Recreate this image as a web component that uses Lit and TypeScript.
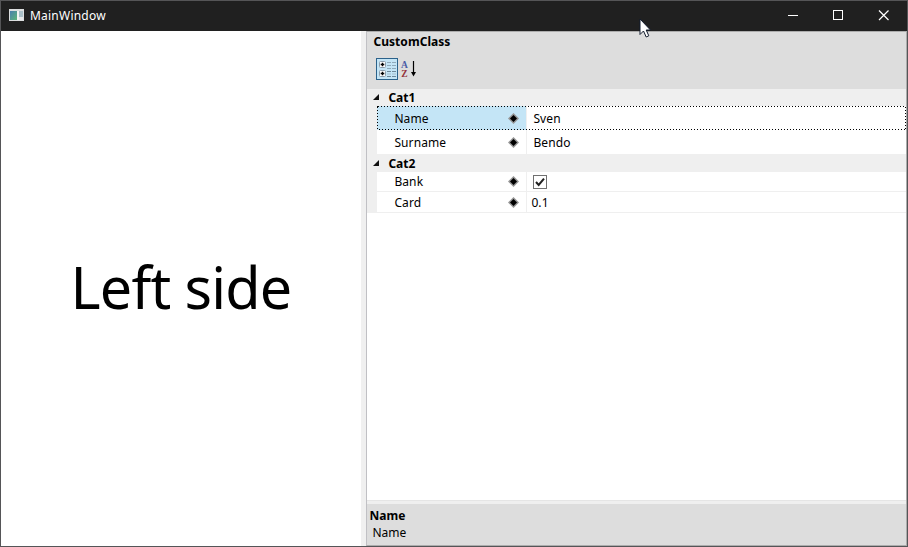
import { LitElement, html, css, svg } from "lit";
import { customElement, property } from "lit/decorators.js";

@customElement("property-row")
class PropertyRow extends LitElement {
  @property() label = "";
  @property() value = "";
  @property({ type: Boolean, reflect: true }) checked = false;
  @property({ type: Boolean, reflect: true }) selected = false;
  @property({ type: Boolean, reflect: true }) tall = false;

  static styles = css`
    :host { display: flex; height: 21px; position: relative; color: #000; }
    :host([tall]) { height: 24px; }
    :host([checked]) { height: 20px; }
    .margin { width: 10px; background: #efefef; flex: none; }
    .name, .value { box-sizing: border-box; border-bottom: 1px solid #efefef; display: flex; align-items: center; background: #fff; }
    .name { width: 149px; padding: 0 7px 0 17.4px; justify-content: space-between; line-height: 18px; }
    .name span { letter-spacing: .1px; }
    .value { flex: 1; border-left: 1px solid #efefef; padding-left: 4.4px; line-height: 18px; letter-spacing: .1px; }
    :host([tall]) .value { padding-left: 6.4px; }
    :host([tall]) .name, :host([tall]) .value { border-bottom: none; }
    span { padding-top: 1px; }
    :host([checked]) span { padding-top: 0; }
    :host([selected]) .name { background: #c4e5f6; }
    .focus { position: absolute; left: 10px; top: 0; width: 529px; height: 24px; }
    svg { display: block; flex: none; }
    .check { margin-left: 1.6px; }
  `;

  render() {
    return html`
      <div class="margin"></div>
      <div class="name">
        <span>${this.label}</span>
        <svg width="11" height="11" viewBox="0 0 11 11">
          <path d="M5.5 0L11 5.5L5.5 11L0 5.5Z" fill="#959595" />
          <path d="M5.5 2L9 5.5L5.5 9L2 5.5Z" fill="#000" />
        </svg>
      </div>
      <div class="value">
        ${this.checked
          ? html`<svg class="check" width="14" height="14" viewBox="0 0 14 14">
              <rect x=".5" y=".5" width="13" height="13" fill="#fff" stroke="#707070" />
              <path d="M3 7L5.7 10L11 3.6" fill="none" stroke="#212121" stroke-width="2" />
            </svg>`
          : html`<span>${this.value}</span>`}
      </div>
      ${this.selected
        ? html`<svg class="focus" viewBox="0 0 529 24">
            <rect x=".5" y=".5" width="528" height="23" fill="none" stroke="#000" stroke-dasharray="1 2" shape-rendering="crispEdges" />
          </svg>`
        : null}
    `;
  }
}

@customElement("category-header")
class CategoryHeader extends LitElement {
  @property() label = "";
  static styles = css`
    :host { display: flex; height: 18px; background: #efefef; font-weight: 700; line-height: 18px; align-items: center; }
    svg { margin: 0 9.4px 1px 6px; display: block; }
  `;
  render() {
    return html`<svg width="6" height="6" viewBox="0 0 6 6"><path d="M6 0V6H0Z" fill="#111" /></svg><span>${this.label}</span>`;
  }
}

@customElement("app-root")
class AppRoot extends LitElement {
  static styles = css`
    :host {
      display: flex; flex-direction: column; box-sizing: border-box; width: 908px; height: 547px;
      border: 1px solid #555557; background: #fff; position: relative; overflow: hidden;
      font: 12px "Noto Sans", "Open Sans", sans-serif; color: #000;
    }
    svg { display: block; }
    .titlebar { height: 30px; background: #202020; color: #fff; display: flex; align-items: center; flex: none; }
    .app-icon { margin: 0 6px 2px 8px; }
    .title { flex: 1; line-height: 18px; letter-spacing: .22px; }
    .buttons { display: flex; }
    .buttons svg { width: 45.5px; height: 30px; }
    .body { flex: 1; display: flex; min-height: 0; }
    .left { width: 360px; display: flex; align-items: center; justify-content: center; font-size: 57.5px; letter-spacing: -.8px; line-height: 80px; white-space: nowrap; padding-bottom: 3px; box-sizing: border-box; }
    .splitter { width: 5px; background: #f0f0f0; }
    .grid { flex: 1; box-sizing: border-box; border: 1px solid #acacac; border-left-color: #c0c0c4; display: flex; flex-direction: column; }
    .head { height: 57px; background: #ddd; flex: none; box-sizing: border-box; padding-top: 1px; }
    .head b { display: block; padding-left: 6.4px; line-height: 18px; height: 25px; letter-spacing: .05px; }
    .tools { display: flex; padding-left: 9px; }
    .rows { flex: 1; }
    .gap { height: 4px; background: #efefef; border-top: 1px solid #e5e5e5; box-sizing: border-box; }
    .info { height: 41px; background: #ddd; box-sizing: border-box; padding: 3px 0 0 2.5px; line-height: 17px; }
    .info div + div { padding-left: 3px; }
    .cursor { position: absolute; left: 638px; top: 17px; }
    .cat1 { height: 17px; }
    .cat2 { box-sizing: border-box; padding-top: 1px; }
  `;

  private plus(y: number) {
    return svg`<rect x="3.5" y=${y + 0.5} width="6" height="6" rx="1" fill="#fff" stroke="#8b9cab" />
      <path d=${`M4.7 ${y + 3.5}h3.6M6.5 ${y + 1.7}v3.6`} stroke="#000" stroke-width="1.4" />`;
  }

  render() {
    return html`
      <div class="titlebar">
        <svg class="app-icon" width="15" height="12" viewBox="0 0 15 12">
          <defs><linearGradient id="pane" x2="1" y2="1"><stop stop-color="#4a7fae" /><stop offset="1" stop-color="#5eb578" /></linearGradient></defs>
          <rect width="15" height="12" fill="#dcdedf" />
          <rect x="1" y="2" width="7" height="9" fill="url(#pane)" />
          <rect x="8" y="2" width="2" height="9" fill="#f4f4f4" />
          <rect x="10" y="2" width="4" height="6" fill="#a9bfc8" />
          <rect x="10" y="8" width="4" height="3" fill="#e6e8ea" />
        </svg>
        <span class="title">MainWindow</span>
        <div class="buttons">
          <svg viewBox="0 0 45.5 30"><path d="M16.5 14.5h10" stroke="#fff" shape-rendering="crispEdges" /></svg>
          <svg viewBox="0 0 45.5 30"><rect x="17" y="9.5" width="9" height="9" fill="none" stroke="#fff" shape-rendering="crispEdges" /></svg>
          <svg viewBox="0 0 45.5 30"><path d="M17 9.5l9.5 9.5M26.5 9.5l-9.5 9.5" stroke="#fff" stroke-width="1.2" /></svg>
        </div>
      </div>
      <div class="body">
        <div class="left"><span>Left side</span></div>
        <div class="splitter"></div>
        <div class="grid">
          <div class="head">
            <b>CustomClass</b>
            <div class="tools">
              <svg width="22" height="22" viewBox="0 0 22 22">
                <rect x=".5" y=".5" width="21" height="21" fill="#c4e5f6" stroke="#2c628b" />
                ${this.plus(3)}${this.plus(12)}
                <path d="M11 4.5h4M16 4.5h4M11 7.5h4M16 7.5h4M11 10.5h4M16 10.5h4" stroke="#8fa9ba" />
                <path d="M11 13.5h4M16 13.5h4M11 18.5h4M16 18.5h4" stroke="#6e8798" />
                <path d="M11 16h4M16 16h4" stroke="#a5bccb" />
              </svg>
              <svg width="20" height="22" viewBox="0 0 20 22">
                <text x="3" y="9.8" font-family="Liberation Serif, serif" font-weight="700" font-size="9.5" fill="#4a5ba6">A</text>
                <text x="3.3" y="18.8" font-family="Liberation Serif, serif" font-weight="700" font-size="9.5" fill="#94343a">Z</text>
                <path d="M15.5 3v13" stroke="#000" stroke-width="1.2" /><path d="M13 14h5l-2.5 4.5Z" />
              </svg>
            </div>
          </div>
          <div class="rows">
            <category-header class="cat1" label="Cat1"></category-header>
            <property-row label="Name" value="Sven" selected tall></property-row>
            <property-row label="Surname" value="Bendo" tall></property-row>
            <category-header class="cat2" label="Cat2"></category-header>
            <property-row label="Bank" checked></property-row>
            <property-row label="Card" value="0.1"></property-row>
          </div>
          <div class="gap"></div>
          <div class="info"><div><b>Name</b></div><div>Name</div></div>
        </div>
      </div>
      <svg class="cursor" width="12" height="20" viewBox="0 0 12 20">
        <path d="M1 1V16.5L4.5 13L7.2 19L9.8 17.8L7.2 12H11.5Z" fill="#fff" stroke="#111a2c" />
      </svg>
    `;
  }
}
